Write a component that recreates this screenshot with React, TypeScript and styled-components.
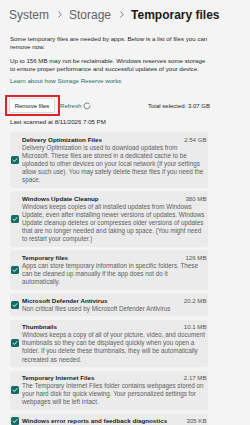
import React from 'react'
import styled, { createGlobalStyle } from 'styled-components'

const GlobalStyle = createGlobalStyle`
  html, body {
    margin: 0;
    padding: 0;
    background: #f4f4f4;
  }
  body {
    font-family: "Liberation Sans", Arial, sans-serif;
    overflow: hidden;
  }
`

// description lines are kept as shown in the settings page
const items = [
  {
    name: 'Delivery Optimization Files',
    size: '2.54 GB',
    lines: [
      'Delivery Optimization is used to download updates from',
      'Microsoft. These files are stored in a dedicated cache to be',
      'uploaded to other devices on your local network (if your settings',
      'allow such use). You may safely delete these files if you need the',
      'space.',
    ],
  },
  {
    name: 'Windows Update Cleanup',
    size: '380 MB',
    lines: [
      'Windows keeps copies of all installed updates from Windows',
      'Update, even after installing newer versions of updates. Windows',
      'Update cleanup deletes or compresses older versions of updates',
      'that are no longer needed and taking up space. (You might need',
      'to restart your computer.)',
    ],
  },
  {
    name: 'Temporary files',
    size: '126 MB',
    lines: [
      'Apps can store temporary information in specific folders. These',
      'can be cleaned up manually if the app does not do it',
      'automatically.',
    ],
  },
  {
    name: 'Microsoft Defender Antivirus',
    size: '20.2 MB',
    lines: ['Non critical files used by Microsoft Defender Antivirus'],
  },
  {
    name: 'Thumbnails',
    size: '10.1 MB',
    lines: [
      'Windows keeps a copy of all of your picture, video, and document',
      'thumbnails so they can be displayed quickly when you open a',
      'folder. If you delete these thumbnails, they will be automatically',
      'recreated as needed.',
    ],
  },
  {
    name: 'Temporary Internet Files',
    size: '2.17 MB',
    lines: [
      'The Temporary Internet Files folder contains webpages stored on',
      'your hard disk for quick viewing. Your personalized settings for',
      'webpages will be left intact.',
    ],
  },
  {
    name: 'Windows error reports and feedback diagnostics',
    size: '305 KB',
    lines: [],
  },
]

const Chevron = () => (
  <ChevronIcon width="4" height="7" viewBox="0 0 4 7">
    <path d="M0.8 0.8 L3.2 3.5 L0.8 6.2" fill="none" stroke="#6a6a6a" strokeWidth="0.9" strokeLinecap="round" strokeLinejoin="round" />
  </ChevronIcon>
)

const Spinner = () => (
  <SpinnerIcon width="8" height="8" viewBox="0 0 8 8">
    <path d="M5.9 1.6 A3 3 0 1 0 7 4" fill="none" stroke="#5a5a5a" strokeWidth="0.8" strokeLinecap="round" />
  </SpinnerIcon>
)

const Check = () => (
  <CheckBox>
    <svg width="8" height="8" viewBox="0 0 8 8">
      <path d="M2 4.2 L3.4 5.5 L6 2.6" fill="none" stroke="#fff" strokeWidth="0.9" strokeLinecap="round" strokeLinejoin="round" />
    </svg>
  </CheckBox>
)

const App = () => {
  return (
    <Page>
      <GlobalStyle />
      <Breadcrumb>
        <Crumb>System</Crumb>
        <Chevron />
        <Crumb>Storage</Crumb>
        <Chevron />
        <Crumb current>Temporary files</Crumb>
      </Breadcrumb>

      <Intro>Some temporary files are needed by apps. Below is a list of files you can remove now.</Intro>
      <Intro gap={5}>Up to 156 MB may not be reclaimable. Windows reserves some storage to ensure proper performance and successful updates of your device.</Intro>
      <LearnLink>Learn about how Storage Reserve works</LearnLink>

      <ActionBar>
        <Highlight>
          <Button>Remove files</Button>
        </Highlight>
        <Refresh>Refresh</Refresh>
        <Spinner />
        <Total>Total selected: 3.07 GB</Total>
      </ActionBar>

      <Scanned>Last scanned at 8/11/2026 7:05 PM</Scanned>

      <List>
        {items.map((item) => (
          <Card key={item.name}>
            <Check />
            <CardBody>
              <CardHead>
                <Name>{item.name}</Name>
                <Size>{item.size}</Size>
              </CardHead>
              {item.lines.map((line) => (
                <DescLine key={line}>{line}</DescLine>
              ))}
            </CardBody>
          </Card>
        ))}
      </List>
    </Page>
  )
}

const Page = styled.div`
  width: 250px;
  height: 425px;
  overflow: hidden;
  box-sizing: border-box;
  padding: 6.5px 0 0 10px;
  background: #f4f4f4;
`
const Breadcrumb = styled.div`
  display: flex;
  align-items: center;
  height: 16px;
  margin-left: -1px;
  white-space: nowrap;
`
const Crumb = styled.span<{ current?: boolean }>`
  font-size: 12px;
  line-height: 16px;
  font-weight: ${(p) => (p.current ? 700 : 400)};
  color: ${(p) => (p.current ? '#1b1b1b' : '#626262')};
`
const ChevronIcon = styled.svg`
  margin: 0 7px 0 9px;
`
const Intro = styled.p<{ gap?: number }>`
  width: 200px;
  margin: ${(p) => p.gap ?? 12.25}px 0 0;
  font-size: 6.15px;
  line-height: 8.5px;
  color: #262626;
`
const LearnLink = styled.div`
  margin-top: 2.75px;
  font-size: 6.15px;
  line-height: 8.5px;
  color: #1b6f69;
`
const ActionBar = styled.div`
  display: flex;
  align-items: center;
  width: 200px;
  height: 21px;
  margin-top: 10px;
`
const Highlight = styled.div`
  display: flex;
  align-items: center;
  box-sizing: border-box;
  width: 55px;
  height: 21px;
  margin-left: -5px;
  padding: 0 3px 0 2px;
  border: 2px solid #d8262c;
`
const Button = styled.div`
  box-sizing: border-box;
  width: 46px;
  height: 15px;
  display: flex;
  align-items: center;
  justify-content: center;
  background: #fcfcfc;
  border: 1px solid #dadada;
  border-radius: 2px;
  font-size: 6px;
  color: #1b1b1b;
`
const Refresh = styled.span`
  font-size: 6.1px;
  color: #1b6f69;
  margin-right: 2px;
`
const SpinnerIcon = styled.svg`
  display: block;
`
const Total = styled.span`
  margin-left: auto;
  font-size: 6px;
  color: #262626;
`
const Scanned = styled.div`
  margin-top: 1.75px;
  font-size: 6.1px;
  line-height: 8.5px;
  color: #262626;
`
const List = styled.div`
  display: flex;
  flex-direction: column;
  gap: 3.5px;
  width: 198px;
  margin-top: 5.75px;
`
const Card = styled.div`
  display: flex;
  align-items: center;
  gap: 3px;
  padding: 3.5px 1.5px 3.5px 1px;
  background: #ebebeb;
  border-radius: 2px;
`
const CheckBox = styled.div`
  flex: none;
  width: 8px;
  height: 8px;
  border-radius: 1.5px;
  background: #136b64;
  display: flex;

  svg {
    display: block;
  }
`
const CardBody = styled.div`
  flex: 1;
  min-width: 0;
`
const CardHead = styled.div`
  display: flex;
  justify-content: space-between;
  align-items: baseline;
`
const Name = styled.span`
  font-size: 6.25px;
  line-height: 8.1px;
  font-weight: 700;
  color: #1a1a1a;
`
const Size = styled.span`
  font-size: 6.1px;
  line-height: 8.1px;
  color: #555;
`
const DescLine = styled.div`
  font-size: 6.3px;
  line-height: 8.1px;
  white-space: nowrap;
  color: #5e5e5e;
`

export default App
